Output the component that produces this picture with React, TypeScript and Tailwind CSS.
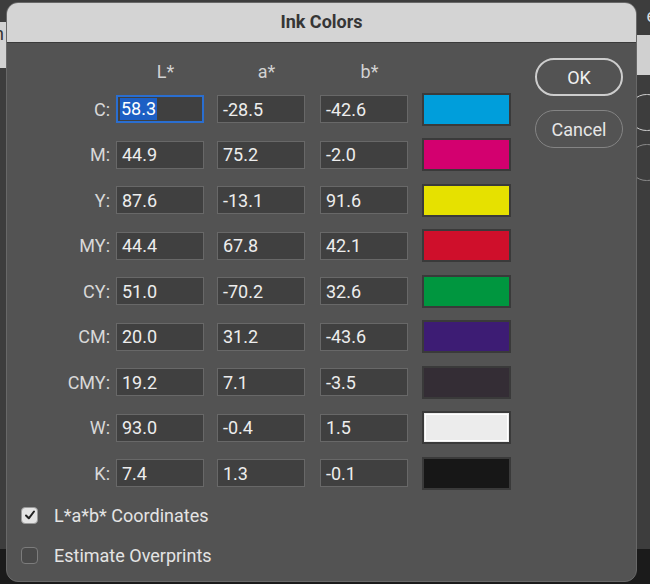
import React from "react";

type Ink = { name: string; L: string; a: string; b: string; swatch: string };

const inks: Ink[] = [
  { name: "C", L: "58.3", a: "-28.5", b: "-42.6", swatch: "bg-[#009edb]" },
  { name: "M", L: "44.9", a: "75.2", b: "-2.0", swatch: "bg-[#d3006f]" },
  { name: "Y", L: "87.6", a: "-13.1", b: "91.6", swatch: "bg-[#e6e100]" },
  { name: "MY", L: "44.4", a: "67.8", b: "42.1", swatch: "bg-[#cf0f2b]" },
  { name: "CY", L: "51.0", a: "-70.2", b: "32.6", swatch: "bg-[#00963f]" },
  { name: "CM", L: "20.0", a: "31.2", b: "-43.6", swatch: "bg-[#3d1c74]" },
  { name: "CMY", L: "19.2", a: "7.1", b: "-3.5", swatch: "bg-[#342d35]" },
  { name: "W", L: "93.0", a: "-0.4", b: "1.5", swatch: "bg-[#ececec]" },
  { name: "K", L: "7.4", a: "1.3", b: "-0.1", swatch: "bg-[#171717]" },
];

function Field({ value, selected }: { value: string; selected?: boolean }) {
  if (selected) {
    return (
      <div className="w-[88px] h-[28px] flex items-center border-2 border-[#2a6ed0] bg-[#404040] pl-[2px]">
        <span className="bg-[#1d5fc4] text-white h-[22px] leading-[22px] px-[1px]">{value}</span>
      </div>
    );
  }
  return (
    <div className="w-[88px] h-[28px] flex items-center border border-[#686868] bg-[#404040] pl-[5px] text-[#ededed]">
      {value}
    </div>
  );
}

function Checkbox({ checked, label }: { checked?: boolean; label: string }) {
  return (
    <div className="flex items-center h-[24px]">
      <div
        className={
          checked
            ? "w-[17px] h-[17px] rounded-[4px] bg-[#e4e4e4] border border-[#9a9a9a] flex items-center justify-center"
            : "w-[17px] h-[17px] rounded-[4px] bg-[#4a4a4a] border border-[#7c7c7c]"
        }
      >
        {checked && (
          <svg width="12" height="12" viewBox="0 0 12 12">
            <polyline points="2,6.5 4.8,9.3 10,2.5" fill="none" stroke="#222" strokeWidth="2" strokeLinecap="round" strokeLinejoin="round" />
          </svg>
        )}
      </div>
      <span className="ml-[16px] text-[18px] text-[#e4e4e4]">{label}</span>
    </div>
  );
}

export default function App() {
  return (
    <div className="relative w-[650px] h-[584px] overflow-hidden bg-[#3d3d3d] font-['Roboto',sans-serif]">
      {/* desktop behind the dialog */}
      <div className="absolute left-0 top-[22px] w-[10px] h-[46px] bg-[#d2d2d2]" />
      <div className="absolute left-[-6px] top-[20px] text-[18px] text-[#333]">n</div>
      <div className="absolute right-0 top-[35px] w-[14px] h-[40px] bg-[#d0d0d0]" />
      <div className="absolute right-[-6px] top-[2px] text-[18px] text-[#dcdcdc]">e</div>
      <div className="absolute left-[628px] top-[94px] w-[38px] h-[37px] rounded-full border border-[#cfcfcf]" />
      <div className="absolute left-[628px] top-[144px] w-[38px] h-[37px] rounded-full border border-[#8a8a8a]" />
      <div className="absolute left-0 right-0 bottom-0 h-[35px] bg-[#1b1b1b]" />

      {/* dialog */}
      <div className="absolute left-[6px] top-[2px] w-[631px] h-[580px] rounded-[12px] overflow-hidden border border-[#686868] bg-[#535353] flex flex-col">
        <div className="h-[40px] shrink-0 bg-[#d4d4d4] border-b border-[#3a3a3a] flex items-center justify-center">
          <span className="text-[18px] font-bold text-[#363636] -mt-[2px]">Ink Colors</span>
        </div>

        <div className="flex text-[18px]">
          <div className="flex flex-col pt-[17px]">
            <div className="flex h-[22px] items-center text-[#d2d2d2]">
              <div className="w-[109px]" />
              <div className="w-[88px] text-center pl-[11px]">L*</div>
              <div className="w-[88px] ml-[13px] text-center pl-[11px]">a*</div>
              <div className="w-[88px] ml-[15px] text-center pl-[11px]">b*</div>
            </div>

            <div className="mt-[13px] flex flex-col gap-y-[17.5px]">
              {inks.map((ink, i) => (
                <div key={ink.name} className="flex items-center h-[28px]">
                  <div className="w-[109px] pr-[6px] text-right text-[#d8d8d8]">{ink.name}:</div>
                  <Field value={ink.L} selected={i === 0} />
                  <div className="ml-[13px]">
                    <Field value={ink.a} />
                  </div>
                  <div className="ml-[15px]">
                    <Field value={ink.b} />
                  </div>
                  <div
                    className={`ml-[14px] w-[89px] h-[33px] shrink-0 border-2 ${
                      ink.name === "W" ? "border-[#3a3a3a] outline outline-1 -outline-offset-4 outline-white" : "border-[#3a3a3a]"
                    } ${ink.swatch}`}
                  />
                </div>
              ))}
            </div>

            <div className="mt-[16px] ml-[14px] flex flex-col gap-y-[16px]">
              <Checkbox checked label="L*a*b* Coordinates" />
              <Checkbox label="Estimate Overprints" />
            </div>
          </div>

          <div className="ml-[24px] pt-[15px] flex flex-col gap-y-[14px]">
            <button className="w-[88px] h-[38px] rounded-full border-2 border-[#cdcdcd] text-[#f0f0f0] text-[18px]">OK</button>
            <button className="w-[88px] h-[38px] rounded-full border border-[#848484] text-[#e6e6e6] text-[18px]">Cancel</button>
          </div>
        </div>
      </div>
    </div>
  );
}
